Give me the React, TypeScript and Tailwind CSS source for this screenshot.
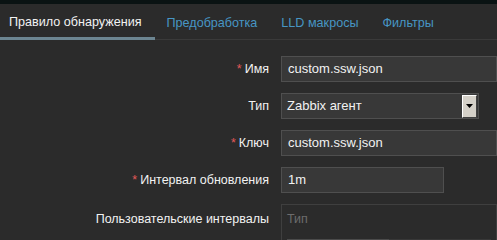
const font = { fontFamily: '"Liberation Sans", Arial, sans-serif' };

const tabs = ["Правило обнаружения", "Предобработка", "LLD макросы", "Фильтры"];

function Label({ text, required }: { text: string; required?: boolean }) {
  return (
    <div className="w-[269px] shrink-0 text-right text-[12.5px] text-[#f2f2f2]">
      {required && <span className="mr-[3px] text-[#e45959]">*</span>}
      {text}
    </div>
  );
}

function TextInput({ value, width }: { value: string; width: string }) {
  return (
    <div
      className={`${width} flex h-[26px] items-center border border-[#4f4f4f] bg-[#383838] px-[6px] text-[13px] text-[#f2f2f2]`}
    >
      {value}
    </div>
  );
}

export default function App() {
  return (
    <div className="h-[240px] w-[497px] overflow-hidden bg-[#2b2b2b]" style={font}>
      <div className="h-[4px] bg-[#0a1313]" />

      <div className="flex h-[36px] border-b border-[#3a3a3a]">
        {tabs.map((t, i) => (
          <div
            key={t}
            className={
              i === 0
                ? "-mb-px flex items-center border-b-[3px] border-[#6c8591] pl-[9px] pr-[13px] pt-[4px] text-[12.6px] text-[#f2f2f2]"
                : "flex items-center px-[12px] pt-[4px] text-[12.6px] text-[#4796c4]"
            }
          >
            {t}
          </div>
        ))}
      </div>

      <div className="flex flex-col gap-[11px] pt-[16px]">
        <div className="flex items-center gap-[12px]">
          <Label text="Имя" required />
          <TextInput value="custom.ssw.json" width="w-[230px]" />
        </div>

        <div className="flex items-center gap-[12px]">
          <Label text="Тип" />
          <div className="flex h-[26px] w-[198px] items-center justify-between border border-[#4f4f4f] bg-[#383838] pl-[5px] pr-[1px] text-[13px] text-[#f2f2f2]">
            <span>Zabbix агент</span>
            <div className="flex h-[23px] w-[15px] items-center justify-center border border-t-white border-l-white border-r-[#404040] border-b-[#404040] bg-[#d4d0c8]">
              <svg width="7" height="4" viewBox="0 0 7 4">
                <path d="M0 0h7L3.5 4z" fill="#000" />
              </svg>
            </div>
          </div>
        </div>

        <div className="flex items-center gap-[12px]">
          <Label text="Ключ" required />
          <TextInput value="custom.ssw.json" width="w-[230px]" />
        </div>

        <div className="flex items-center gap-[12px]">
          <Label text="Интервал обновления" required />
          <TextInput value="1m" width="w-[163px]" />
        </div>

        <div className="flex items-start gap-[12px]">
          <div className="pt-[6px]">
            <Label text="Пользовательские интервалы" />
          </div>
          <div className="h-[60px] w-[230px] border border-[#3f3f3f] px-[5px] pt-[5px]">
            <div className="text-[12.5px] text-[#6c6c6c]">Тип</div>
            <div className="mt-[10px] flex h-[20px]">
              <div className="w-[102px] bg-[#4b4b4b]" />
              <div className="flex-1 bg-[#383838]" />
            </div>
          </div>
        </div>
      </div>
    </div>
  );
}
